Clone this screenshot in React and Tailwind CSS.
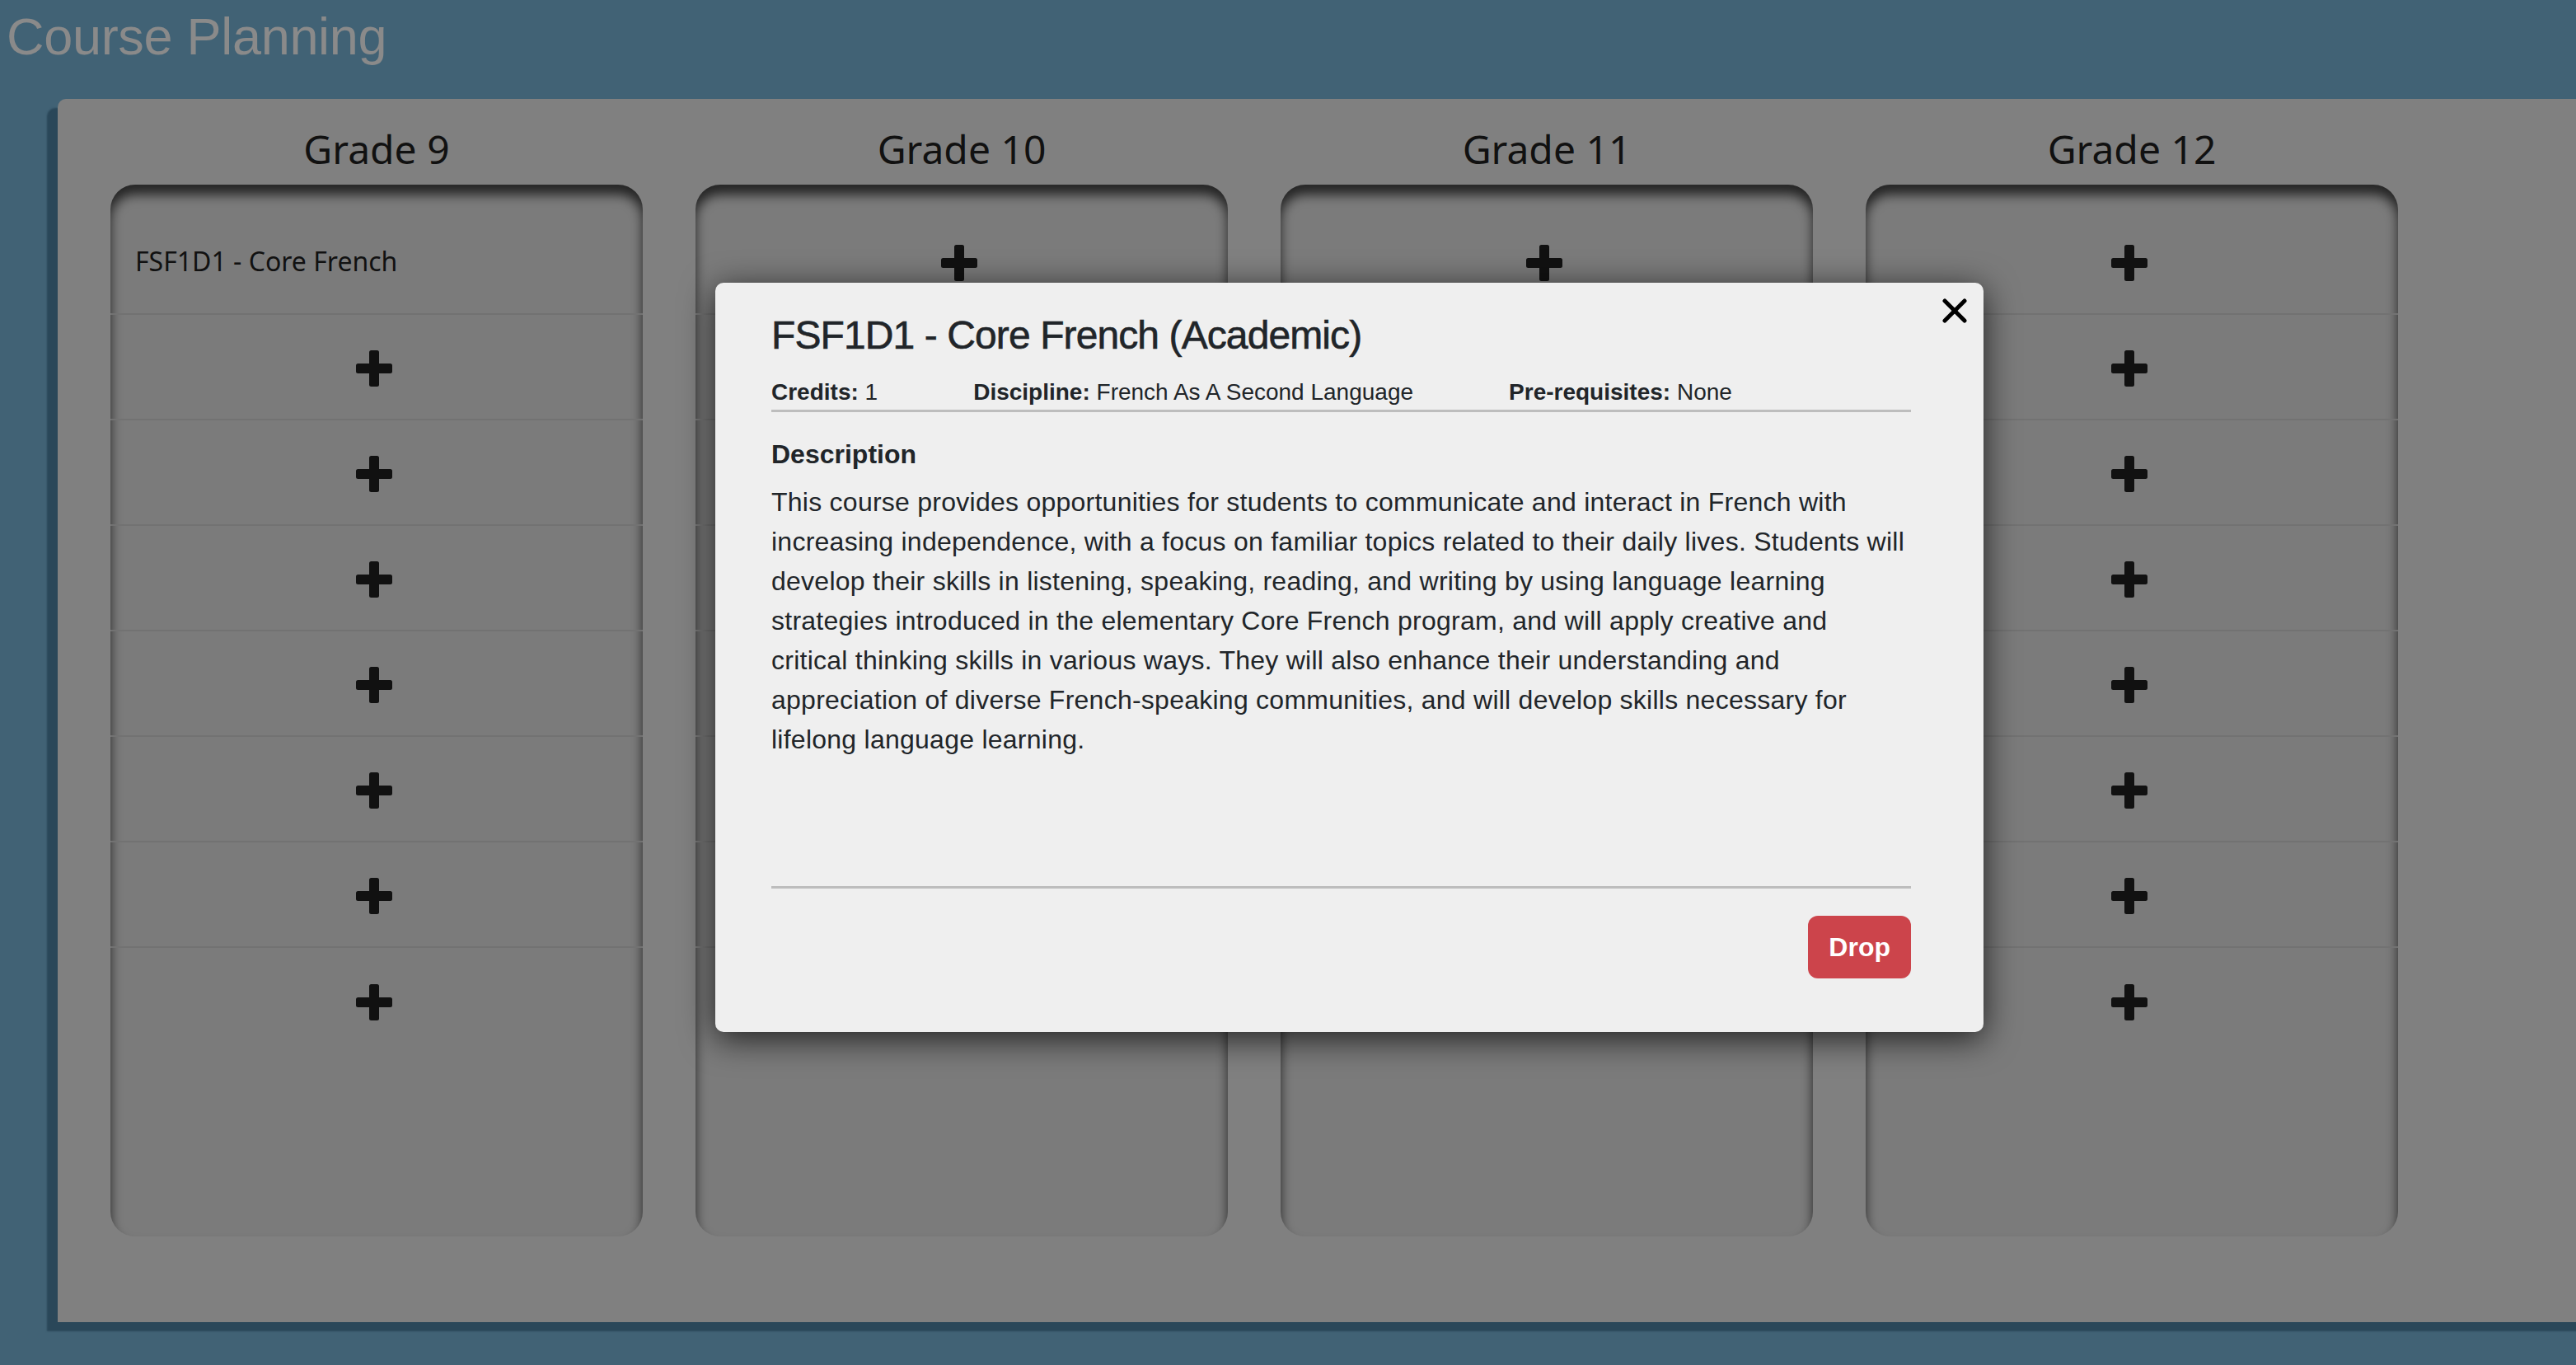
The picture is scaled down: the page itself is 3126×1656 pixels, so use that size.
const grades = ["Grade 9", "Grade 10", "Grade 11", "Grade 12"];

const description =
  "This course provides opportunities for students to communicate and interact in French with increasing independence, with a focus on familiar topics related to their daily lives. Students will develop their skills in listening, speaking, reading, and writing by using language learning strategies introduced in the elementary Core French program, and will apply creative and critical thinking skills in various ways. They will also enhance their understanding and appreciation of diverse French-speaking communities, and will develop skills necessary for lifelong language learning.";

function PlusIcon() {
  return (
    <svg width="44" height="44" viewBox="0 0 44 44" fill="#111111">
      <rect x="16" y="0" width="12" height="44" rx="2.5" />
      <rect x="0" y="16" width="44" height="12" rx="2.5" />
    </svg>
  );
}

function GradeColumn({ name, courses }) {
  const slots = Array.from({ length: 8 }, (_, i) => courses[i] || null);
  return (
    <div className="flex w-[646px] shrink-0 flex-col">
      <div className="flex h-[104px] items-center justify-center pt-[18px] text-[48px] text-[#111111] [font-family:'Comic_Sans_MS','Noto_Sans',sans-serif]">
        {name}
      </div>
      <div className="h-[1276px] rounded-[30px] bg-[#7b7b7b] pt-[30px] shadow-[inset_0_12px_14px_rgba(0,0,0,0.7)]">
        <div className="divide-y-2 divide-[#727272]">
          {slots.map((course, i) => (
            <div key={i} className="flex h-[128px] items-center">
              {course ? (
                <span className="pl-[30px] text-[32px] text-[#111111] [font-family:'Comic_Sans_MS','Noto_Sans',sans-serif]">
                  {course}
                </span>
              ) : (
                <div className="flex w-full justify-center pr-[7px] pt-[3px]">
                  <PlusIcon />
                </div>
              )}
            </div>
          ))}
        </div>
      </div>
    </div>
  );
}

function CourseModal() {
  return (
    <div className="absolute left-[868px] top-[343px] flex h-[909px] w-[1539px] flex-col rounded-[10px] bg-[#efefef] pl-[68px] pr-[88px] pt-[35px] text-[#212529] shadow-[0_8px_40px_rgba(0,0,0,0.75)] [font-family:'Liberation_Sans',Arial,sans-serif]">
      <button className="absolute right-[20px] top-[19px] h-[30px] w-[30px]">
        <svg width="30" height="30" viewBox="0 0 30 30" stroke="#000" strokeWidth="5" strokeLinecap="round">
          <line x1="3" y1="3" x2="27" y2="27" />
          <line x1="27" y1="3" x2="3" y2="27" />
        </svg>
      </button>
      <h2 className="text-[48px] leading-[1.2] tracking-[-0.9px] [-webkit-text-stroke:0.6px_#212529]">
        FSF1D1 - Core French (Academic)
      </h2>
      <div className="mt-[19px] flex gap-[116px] border-b-[3px] border-[#bdbdbd] text-[28px] leading-[1.5]">
        <span>
          <b>Credits:</b> 1
        </span>
        <span>
          <b>Discipline:</b> French As A Second Language
        </span>
        <span>
          <b>Pre-requisites:</b> None
        </span>
      </div>
      <div className="h-[578px] border-b-[3px] border-[#bdbdbd] pt-[27px]">
        <h3 className="text-[32px] font-bold leading-[1.5]">Description</h3>
        <p className="mt-[10px] text-[32px] leading-[1.5] tracking-[0.25px]">{description}</p>
      </div>
      <div className="flex justify-end pt-[33px]">
        <button className="h-[76px] rounded-[12px] bg-[#cc444b] px-[25px] text-[32px] font-bold text-white">
          Drop
        </button>
      </div>
    </div>
  );
}

export default function App() {
  return (
    <div className="relative h-[1656px] w-[3126px] overflow-hidden bg-[#416275]">
      <h1 className="pl-[8px] pt-[13px] text-[63px] leading-none tracking-[-0.3px] text-[#8a8a8a] [font-family:'Liberation_Sans',Arial,sans-serif]">
        Course Planning
      </h1>
      <div className="ml-[70px] mt-[44px] flex h-[1484px] w-[3100px] gap-[64px] rounded-tl-[10px] bg-[#808080] pl-[64px] shadow-[-13px_11px_2px_#2a4759]">
        {grades.map((g, i) => (
          <GradeColumn key={g} name={g} courses={i === 0 ? ["FSF1D1 - Core French"] : []} />
        ))}
      </div>
      <CourseModal />
    </div>
  );
}
